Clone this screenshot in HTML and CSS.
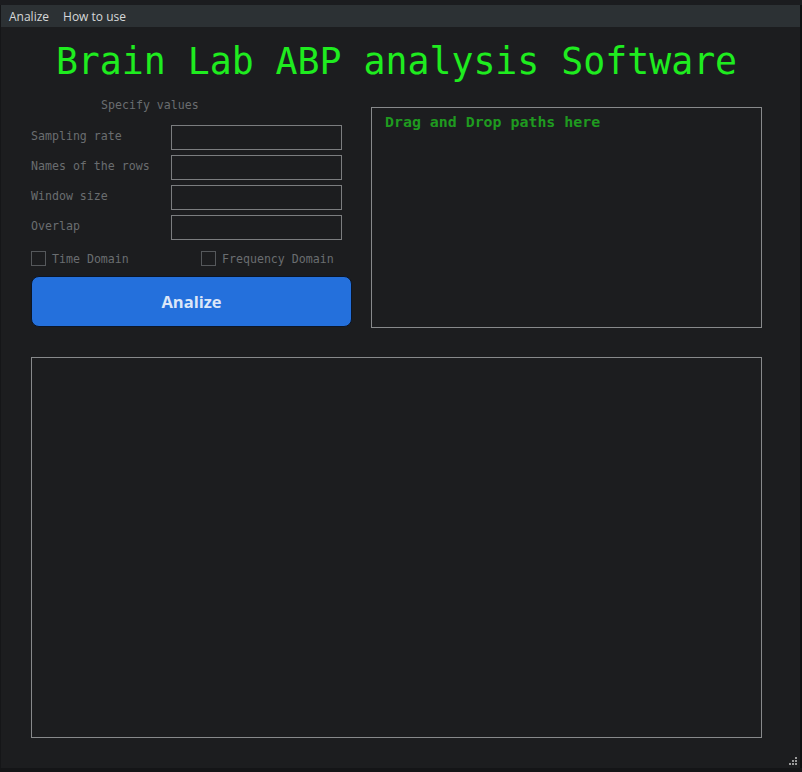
FILE: index.html
```html
<!DOCTYPE html>
<html>
<head>
<meta charset="utf-8">
<link rel="stylesheet" href="styles.css">
</head>
<body>
<div class="topstrip"></div>
<div class="window">
  <div class="menubar">
    <span class="menu-item">Analize</span>
    <span class="menu-item">How to use</span>
  </div>
  <div class="content">
    <h1 class="title">Brain Lab ABP analysis Software</h1>
    <div class="upper">
      <div class="left">
        <div class="specify">Specify values</div>
        <div class="form">
          <label class="lbl">Sampling rate</label><div class="input"></div>
          <label class="lbl">Names of the rows</label><div class="input"></div>
          <label class="lbl">Window size</label><div class="input"></div>
          <label class="lbl">Overlap</label><div class="input"></div>
        </div>
        <div class="checks">
          <div class="check"><span class="box"></span><span class="ctext">Time Domain</span></div>
          <div class="check"><span class="box"></span><span class="ctext">Frequency Domain</span></div>
        </div>
        <button class="analyze">Analize</button>
      </div>
      <div class="drop">Drag and Drop paths here</div>
    </div>
    <div class="output"></div>
  </div>
  <svg class="grip" width="10" height="10" viewBox="0 0 10 10">
    <rect x="7" y="1" width="2" height="2" fill="#9a9a9a"/>
    <rect x="4" y="4" width="2" height="2" fill="#9a9a9a"/>
    <rect x="7" y="4" width="2" height="2" fill="#9a9a9a"/>
    <rect x="1" y="7" width="2" height="2" fill="#9a9a9a"/>
    <rect x="4" y="7" width="2" height="2" fill="#9a9a9a"/>
    <rect x="7" y="7" width="2" height="2" fill="#9a9a9a"/>
  </svg>
</div>
</body>
</html>
```
FILE: styles.css
```css
html, body {
  margin: 0;
  padding: 0;
}
body {
  background: #141517;
  width: 802px;
  height: 772px;
  overflow: hidden;
}
.topstrip {
  height: 5px;
  background: #1b1c1f;
}
.window {
  position: relative;
  width: 802px;
  height: 763px;
  background: #1c1d1f;
  border-left: 1px solid #151618;
  border-right: 2px solid #0e0f10;
  box-sizing: border-box;
}
.menubar {
  height: 22px;
  background: #2c3134;
  display: flex;
  align-items: center;
  gap: 14px;
  padding-left: 8px;
  font-family: "Open Sans", "Noto Sans", sans-serif;
  font-size: 12px;
  color: #d6d8d9;
}
.content {
  padding: 0 0 0 30px;
  width: 731px;
}
.title {
  margin: 14px 0 0 0;
  font-family: "DejaVu Sans Mono", monospace;
  font-weight: normal;
  font-size: 36.5px;
  line-height: 42px;
  color: #1fec1f;
  text-align: center;
  white-space: nowrap;
}
.upper {
  display: flex;
  gap: 19px;
  margin-top: 15px;
}
.left {
  width: 321px;
  flex: none;
  font-family: "DejaVu Sans Mono", monospace;
  font-size: 11.6px;
  color: #6a6d70;
}
.specify {
  margin-left: 70px;
  line-height: 14px;
}
.form {
  display: grid;
  grid-template-columns: 140px 171px;
  grid-auto-rows: 25px;
  row-gap: 5px;
  margin-top: 13px;
  align-items: center;
}
.lbl {
  line-height: 14px;
  margin-top: -4px;
}
.input {
  height: 25px;
  box-sizing: border-box;
  border: 1px solid #7b7d7f;
  background: #1c1d1f;
}
.checks {
  display: flex;
  margin-top: 11px;
  height: 15px;
}
.check {
  display: flex;
  flex: none;
  align-items: center;
  gap: 6px;
  width: 170px;
}
.check + .check {
  width: auto;
}
.box {
  width: 15px;
  height: 15px;
  flex: none;
  box-sizing: border-box;
  border: 1px solid #55585b;
}
.ctext {
  line-height: 14px;
}
.analyze {
  display: block;
  margin-top: 10px;
  width: 321px;
  height: 51px;
  background: #2470dc;
  border: 1px solid #0b1628;
  border-radius: 8px;
  color: #dbe6f8;
  font-family: "Open Sans", "Noto Sans", sans-serif;
  font-weight: 700;
  font-size: 16.5px;
  padding: 0;
}
.drop {
  width: 391px;
  height: 221px;
  flex: none;
  margin-top: 9px;
  box-sizing: border-box;
  border: 1px solid #87898b;
  padding: 5px 13px;
  font-family: "DejaVu Sans Mono", monospace;
  font-weight: bold;
  font-size: 14.9px;
  line-height: 18px;
  color: #1f9a1f;
}
.output {
  margin-top: 29px;
  width: 731px;
  height: 381px;
  box-sizing: border-box;
  border: 1px solid #87898b;
}
.grip {
  position: absolute;
  right: 2px;
  bottom: 2px;
}
```
